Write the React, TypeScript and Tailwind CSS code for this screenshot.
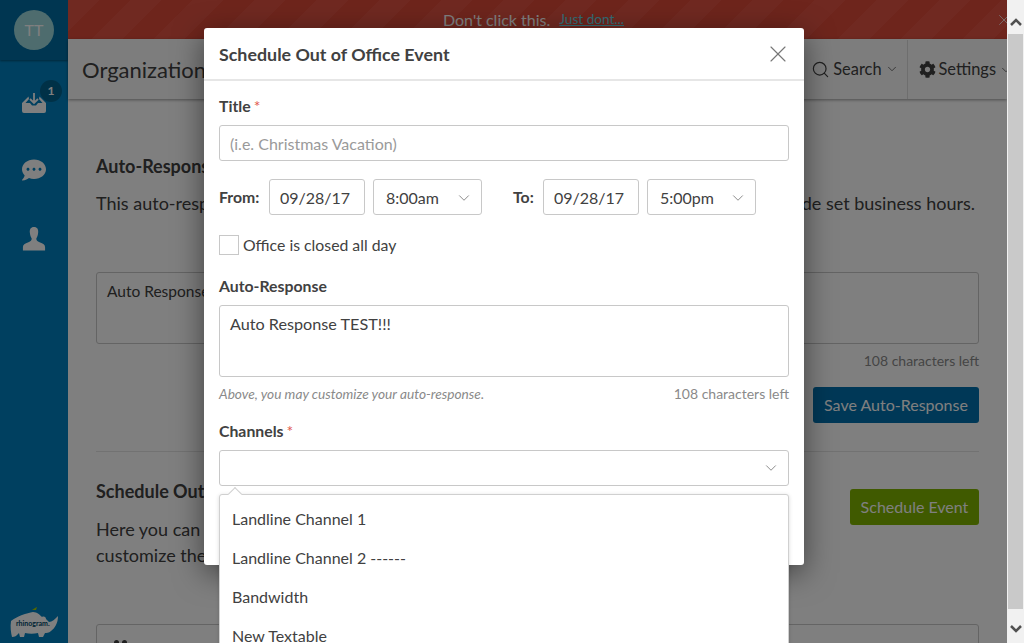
import { ChevronDown, Search, X } from 'lucide-react'
import { FaCog, FaCommentDots } from 'react-icons/fa'

const InboxIcon = () => (
  <svg width="24" height="20" viewBox="0 0 24 20" fill="#fff">
    <path d="M12 0 V9.5 M8 6 L12 10 L16 6" fill="none" stroke="#fff" strokeWidth="1.8" />
    <path d="M6.5 3.5 L0 10 V18 a2 2 0 0 0 2 2 H22 a2 2 0 0 0 2 -2 V10 L17.5 3.5 L17 6 L20.5 10 H16 L14 12.5 H10 L8 10 H3.5 L7 6 Z" />
  </svg>
)

const UserIcon = () => (
  <svg width="24" height="24" viewBox="0 0 26 25" fill="#fff" preserveAspectRatio="none">
    <path d="M13 0 C9.5 0 8 2.5 8.5 6 C8.8 8.5 9.5 10.5 10.5 12 C10.5 14 9.5 15 7 16 C3 17.5 1 18.5 1 21 V24.5 H25 V21 C25 18.5 23 17.5 19 16 C16.5 15 15.5 14 15.5 12 C16.5 10.5 17.2 8.5 17.5 6 C18 2.5 16.5 0 13 0 Z" />
  </svg>
)

const RhinoLogo = () => (
  <svg width="50" height="32" viewBox="0 0 50 32">
    <path d="M23 3 l3 -2 l2 -1 l-1 3 z" fill="#a8d000" />
    <path d="M2 14 C8 9 18 6 24 5 C28 5 31 8 33 10 C35 9 37 10 37 12 L40 15 C43 15 46 12 49 9 C49 16 46 21 42 24 C40 26 37 26 36 26 L34 30 H30 L29 26 C25 27 20 27 16 26 L15 30 H11 L10 26 C7 29 6 30 3 30 C2 26 1 20 2 14 Z" fill="#fff" />
    <text x="7" y="19" fontSize="7" fontWeight="700" fill="#004668" fontFamily="Lato, sans-serif">rhinogram.</text>
  </svg>
)

const Label = ({ text, required }: { text: string; required?: boolean }) => (
  <div className="text-[15.8px] leading-[20px] font-bold text-[#414141]">
    {text}
    {required && <span className="ml-[3px] font-normal text-[#e2574c]">*</span>}
  </div>
)

const DateBox = ({ value }: { value: string }) => (
  <div className="flex h-[36px] w-[96px] items-center rounded-[3px] border border-[#c8c8c8] pt-[1px] pl-[10px] text-[16px]">{value}</div>
)

const TimeSelect = ({ value }: { value: string }) => (
  <div className="flex h-[36px] w-[109px] items-center justify-between rounded-[3px] border border-[#c8c8c8] pt-[1px] pr-[8px] pl-[12px] text-[16px]">
    {value}
    <ChevronDown size={18} strokeWidth={1} color="#666" />
  </div>
)

const channels = ['Landline Channel 1', 'Landline Channel 2 ------', 'Bandwidth', 'New Textable']

const Sidebar = () => (
  <div className="flex h-full w-[68px] shrink-0 flex-col items-center bg-[#0081c0]">
    <div className="flex h-[60px] w-full shrink-0 items-center justify-center bg-[#006da3] shadow-[0_1px_2px_rgba(0,0,0,0.4)]">
      <div className="flex h-[40px] w-[40px] items-center justify-center rounded-full bg-[#9cd8dc] text-[16px] text-white">TT</div>
    </div>
    <div className="relative mt-[33px] flex">
      <InboxIcon />
      <div className="absolute -top-[13px] left-[18px] flex h-[22px] w-[22px] items-center justify-center rounded-full bg-[#00628f] text-[12px] font-bold text-white">1</div>
    </div>
    <div className="mt-[45px] flex">
      <FaCommentDots size={24} color="#fff" />
    </div>
    <div className="mt-[45px] flex">
      <UserIcon />
    </div>
    <div className="mt-auto mb-[4px] flex">
      <RhinoLogo />
    </div>
  </div>
)

const Page = () => (
  <div className="flex min-w-0 flex-1 flex-col bg-white">
    <div className="flex h-[39px] shrink-0 items-center justify-center bg-[repeating-linear-gradient(135deg,#e05242_0,#e05242_22px,#dc4a39_22px,#dc4a39_44px)] pr-[8px] text-[16px] text-white">
      Don't click this.
      <span className="ml-[9px] text-[13.6px] text-[#66d9e8] underline">Just dont...</span>
    </div>
    <div className="relative flex h-[60px] shrink-0 items-center justify-between bg-[#fafafa] pl-[14px] shadow-[0_1px_3px_rgba(0,0,0,0.4)]">
      <div className="text-[22px] text-[#404040]">Organization Preferences</div>
      <div className="-mr-[6px] flex h-full items-center pt-[1px] text-[16.4px] text-[#404040]">
        <div className="flex items-center gap-[3px] pr-[8px]">
          <Search size={19} strokeWidth={1.5} />
          Search
          <ChevronDown size={14} strokeWidth={1.25} />
        </div>
        <div className="flex h-full items-center gap-[3px] border-l border-[#dcdcdc] pl-[11px]">
          <FaCog size={17} />
          Settings
          <ChevronDown size={14} strokeWidth={1.25} />
        </div>
      </div>
    </div>
    <div className="flex flex-col px-[28px] pt-[57px] text-[#404040]">
      <div className="text-[18px] leading-[20px] font-bold">Auto-Response</div>
      <div className="mt-[17px] flex justify-between pr-[4px] text-[18px] leading-[20px]">
        <span>This auto-response</span>
        <span>outside set business hours.</span>
      </div>
      <div className="mt-[59px] h-[72px] rounded-[3px] border border-[#c8c8c8] px-[10px] py-[7px] text-[15.5px]">Auto Response TEST!!!</div>
      <div className="mt-[9px] text-right text-[14px] leading-[16px] text-[#8a8a8a]">108 characters left</div>
      <div className="mt-[18px] flex justify-end">
        <div className="flex h-[36px] w-[166px] items-center justify-center rounded-[3px] bg-[#0070ae] text-[16px] text-white">Save Auto-Response</div>
      </div>
      <div className="mt-[28px] border-t border-[#e4e4e4]" />
      <div className="mt-[27px] flex justify-between">
        <div>
          <div className="mt-[2px] text-[18px] leading-[20px] font-bold">Schedule Out of Office Events</div>
          <div className="mt-[15px] text-[18px] leading-[26px]">
            Here you can schedule events
            <br />
            customize the response
          </div>
        </div>
        <div className="mt-[10px] flex h-[36px] w-[129px] items-center justify-center rounded-[3px] bg-[#80b400] text-[16px] text-white">Schedule Event</div>
      </div>
      <div className="mt-[56px] h-[60px] rounded-[3px] border border-[#c8c8c8] px-[17px] pt-[15px]">
        <div className="flex gap-[3px]">
          <div className="h-[5px] w-[5px] rounded-full bg-[#404040]" />
          <div className="h-[5px] w-[5px] rounded-full bg-[#404040]" />
        </div>
      </div>
    </div>
  </div>
)

const Modal = () => (
  <div className="absolute top-[28px] left-[204px] h-[537px] w-[600px] rounded-[3px] bg-white text-[#414141] shadow-[0_8px_30px_rgba(0,0,0,0.5)]">
    <div className="flex h-[53px] items-center justify-between border-b-2 border-[#e6e6e6] pr-[12px] pl-[15px]">
      <div className="pt-[1px] text-[17.85px] font-bold">Schedule Out of Office Event</div>
      <X size={28} strokeWidth={1} color="#777" />
    </div>
    <div className="flex flex-col px-[15px] pt-[15px]">
      <Label text="Title" required />
      <div className="mt-[9px] flex h-[36px] items-center rounded-[3px] border border-[#c8c8c8] px-[10px] pt-[1px] text-[16px] text-[#9a9a9a]">(i.e. Christmas Vacation)</div>
      <div className="mt-[18px] flex items-center">
        <div className="w-[42px]"><Label text="From:" /></div>
        <div className="ml-[8px]"><DateBox value="09/28/17" /></div>
        <div className="ml-[8px]"><TimeSelect value="8:00am" /></div>
        <div className="ml-[31px] w-[22px]"><Label text="To:" /></div>
        <div className="ml-[8px]"><DateBox value="09/28/17" /></div>
        <div className="ml-[8px]"><TimeSelect value="5:00pm" /></div>
      </div>
      <div className="mt-[20px] flex items-center gap-[4px] text-[15.8px] leading-[20px]">
        <div className="h-[20px] w-[20px] border border-[#c8c8c8]" />
        Office is closed all day
      </div>
      <div className="mt-[21px]"><Label text="Auto-Response" /></div>
      <div className="mt-[9px] h-[72px] rounded-[3px] border border-[#c8c8c8] px-[10px] py-[7px] text-[16.2px] leading-[22px]">Auto Response TEST!!!</div>
      <div className="mt-[9px] flex justify-between text-[13.7px] leading-[16px] text-[#8a8a8a]">
        <span className="italic">Above, you may customize your auto-response.</span>
        <span className="text-[14px]">108 characters left</span>
      </div>
      <div className="mt-[19px]"><Label text="Channels" required /></div>
      <div className="relative mt-[9px]">
        <div className="flex h-[36px] items-center justify-end rounded-[3px] border border-[#c8c8c8] pr-[8px]">
          <ChevronDown size={18} strokeWidth={1} color="#666" />
        </div>
        <div className="absolute top-[44px] right-0 left-0 h-[220px] rounded-[3px] border border-[#d0d0d0] bg-white pt-[4px] text-[16px] shadow-[0_1px_4px_rgba(0,0,0,0.15)]">
          <div className="absolute -top-[6px] left-[10px] h-[10px] w-[10px] rotate-45 border-t border-l border-[#d0d0d0] bg-white" />
          {channels.map((c) => (
            <div key={c} className="flex h-[39px] items-center px-[12px]">{c}</div>
          ))}
        </div>
      </div>
    </div>
  </div>
)

const Scrollbar = () => (
  <div className="flex h-full w-[17px] shrink-0 flex-col items-center bg-[#f1f1f1]">
    <div className="flex h-[34px] items-end justify-center pb-[8px]">
      <svg width="12" height="8" viewBox="0 0 12 8"><path d="M1 7 L6 2 L11 7" fill="none" stroke="#505050" strokeWidth="2.5" /></svg>
    </div>
    <div className="h-[575px] w-[15px] bg-[#c9c9c9]" />
    <div className="flex h-[34px] items-start justify-center pt-[16px]">
      <svg width="12" height="8" viewBox="0 0 12 8"><path d="M1 1 L6 6 L11 1" fill="none" stroke="#505050" strokeWidth="2.5" /></svg>
    </div>
  </div>
)

export default function App() {
  return (
    <div className="relative flex h-[643px] w-full overflow-hidden font-['Lato',sans-serif]">
      <div className="relative flex min-w-0 flex-1 overflow-hidden">
        <Sidebar />
        <Page />
        <X size={18} strokeWidth={1} color="#fff" className="absolute top-[11px] -right-[6px]" />
        <div className="absolute inset-0 bg-black/50" />
        <Modal />
      </div>
      <Scrollbar />
    </div>
  )
}
